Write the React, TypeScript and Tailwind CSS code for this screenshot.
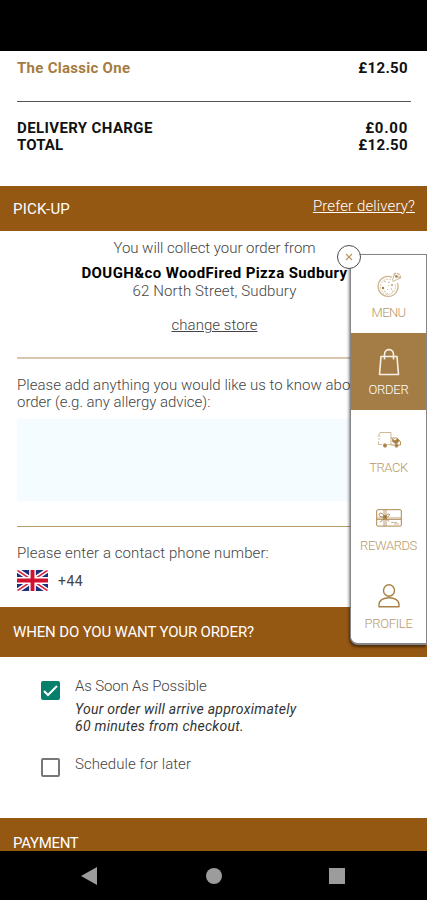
import type { ReactNode } from "react"

const Summary = () => {
  return (
    <section className="h-[135px] px-[17px] text-[15px] leading-[17px] font-bold text-[#111]">
      <div className="flex h-[50px] justify-between pt-[9px] pr-0.5">
        <span className="tracking-[0.28px] text-[#a47c42]">The Classic One</span>
        <span className="tracking-[0.35px]">£12.50</span>
      </div>
      <div className="-mr-px h-px bg-[#555]" />
      <div className="flex justify-between pt-[18px] pr-0.5">
        <span className="tracking-[0.38px]">DELIVERY CHARGE</span>
        <span className="tracking-[0.75px]">£0.00</span>
      </div>
      <div className="flex justify-between pr-0.5">
        <span className="tracking-[0.1px]">TOTAL</span>
        <span className="tracking-[0.35px]">£12.50</span>
      </div>
    </section>
  )
}

const Flag = () => (
  <svg className="h-[21px] w-[31px] rounded-[2px]" viewBox="0 0 60 40" preserveAspectRatio="none">
    <rect width="60" height="40" fill="#1f2f7c" />
    <path d="M0 0L60 40M60 0L0 40" stroke="#fff" strokeWidth="9" />
    <path d="M0 0L60 40M60 0L0 40" stroke="#d8283f" strokeWidth="3" />
    <path d="M30 0V40M0 20H60" stroke="#fff" strokeWidth="13" />
    <path d="M30 0V40M0 20H60" stroke="#d3112f" strokeWidth="7.5" />
  </svg>
)

const PizzaIcon = () => (
  <svg width="26" height="28" viewBox="0 0 26 28" fill="none" stroke="#cdb591">
    <path d="M16 6.200A10 10 0 1 0 21.500 12" strokeWidth="1.3" />
    <path d="M15 8.800A7.600 7.600 0 1 0 18.800 12.500" strokeWidth="0.8" strokeDasharray="2 1" />
    <path d="M16.500 9.500L18 4L24.500 7L16.500 10.500" strokeWidth="1" />
    <path d="M18 4C18.500 1 24.500 2 24.500 7" strokeWidth="1.4" strokeDasharray="3 0.800" />
    <path d="M8 10l2 1M12 12l2-1M8 20l2 1M15 17l1 2M11 23l1-1M12 18l-1 1M16 21l1-1M12 14l1 1" strokeWidth="0.9" />
    <circle cx="7" cy="17" r="1.200" fill="#a47c42" stroke="none" />
    <circle cx="16" cy="14" r="0.900" fill="#b8935e" stroke="none" />
    <circle cx="20.500" cy="5.500" r="1.300" fill="#a47c42" stroke="none" />
  </svg>
)

const BagIcon = () => (
  <svg width="22" height="28" viewBox="0 0 22 28" fill="none" stroke="#f7f0e6" strokeWidth="1.6">
    <path d="M3 8.500H19L20.500 26.500H1.500Z" strokeLinejoin="round" />
    <path d="M6.500 11.500V6.500C6.500 0 15.500 0 15.500 6.500V11.500" />
  </svg>
)

const TruckIcon = () => (
  <svg width="26" height="20" viewBox="0 0 26 20" fill="none" stroke="#b8935e" strokeWidth="1">
    <path d="M4 2.500H15V14.500H11.500M4 2.500L2.500 5M4.500 6H1.500M4 9H2M2.500 11.500V14.500H6" opacity="0.65" />
    <path d="M15 8H21L24.500 11.500V15H22.500M15 15H18" />
    <path d="M16.500 9L19 11L21.500 8.500L23.500 11L20 14L16.500 11.500Z" fill="#a47c42" />
    <circle cx="9" cy="15.500" r="1.700" fill="#a47c42" />
    <circle cx="20.500" cy="15.500" r="1.700" fill="#a47c42" />
  </svg>
)

const RewardsIcon = () => (
  <svg width="26" height="18" viewBox="0 0 26 18" fill="none" stroke="#ad8650" strokeWidth="1">
    <rect x="0.700" y="0.700" width="24.600" height="16.400" rx="1" />
    <path d="M8 1V17M10 1V17M1 9H25M1 10.500H25" strokeWidth="0.800" />
    <path d="M9 8C5 1 1.500 5 4 7.500L9 8.500C16 8 14 1 9 8ZM9 8.500L4 13.500M9 8.500L13 12.500" />
    <circle cx="9" cy="8" r="1.800" fill="#a47c42" />
    <path d="M15 13.500H21M18 15H23" strokeWidth="0.600" />
  </svg>
)

const ProfileIcon = () => (
  <svg width="22" height="24" viewBox="0 0 22 24" fill="none" stroke="#a98147" strokeWidth="1.400">
    <ellipse cx="11" cy="6.500" rx="5.500" ry="5.800" />
    <path d="M1 22.800V20.500C1 11.500 21 11.500 21 20.500V22.800Z" strokeLinejoin="round" />
  </svg>
)

interface MenuItemProps {
  label: ReactNode
  icon: ReactNode
  active?: boolean
}

const MenuItem = ({ label, icon, active = false }: MenuItemProps) => (
  <li
    className={
      active
        ? "flex h-[77px] flex-col items-center bg-[#a47c45] pt-[15px] text-white"
        : "flex h-[78px] flex-col items-center pt-4 text-[#b8996d]"
    }
  >
    <div className="flex h-7 items-center justify-center">{icon}</div>
    <span className="mt-1.5 text-[13px] leading-4 font-light">{label}</span>
  </li>
)

const SideMenu = () => {
  return (
    <nav className="absolute top-[254px] left-[350px] h-[391px] w-[77px] rounded-bl-[8px] border border-b-2 border-[#85858a] bg-white shadow-[-1px_2px_3px_rgba(0,0,0,0.5)]">
      <ul>
        <MenuItem icon={<PizzaIcon />} label={<span className="tracking-[-0.6px]">MENU</span>} />
        <MenuItem icon={<BagIcon />} label={<span className="tracking-[-0.2px]">ORDER</span>} active />
        <MenuItem icon={<TruckIcon />} label={<span className="tracking-[-0.4px]">TRACK</span>} />
        <MenuItem icon={<RewardsIcon />} label={<span className="tracking-[-0.4px]">REWARDS</span>} />
        <MenuItem icon={<ProfileIcon />} label={<span className="tracking-[-0.3px]">PROFILE</span>} />
      </ul>
      <button
        type="button"
        className="absolute -top-[10px] -left-[14px] flex size-6 items-center justify-center rounded-full border border-[#4c4c4c] bg-white"
      >
        <svg width="8" height="8" viewBox="0 0 8 8" stroke="#b8935e" strokeWidth="1.100">
          <path d="M1 1L7 7M7 1L1 7" />
        </svg>
      </button>
    </nav>
  )
}

const PickUp = () => {
  return (
    <section className="h-[376px] px-[17px] pt-[9px] text-[15px] leading-[17px] font-light text-[#444]">
      <div className="flex flex-col items-center pl-[2px]">
        <p className="tracking-[-0.02px]">You will collect your order from</p>
        <p className="mt-2 font-bold whitespace-nowrap tracking-[0.39px] text-black">DOUGH&amp;co WoodFired Pizza Sudbury</p>
        <p className="mt-px tracking-[0.1px]">62 North Street, Sudbury</p>
        <a className="mt-[17px] tracking-[0.05px] underline">change store</a>
      </div>
      <div className="mt-[23px] h-0.5 bg-[#d9c5b0]" />
      <p className="mt-[18px] whitespace-nowrap tracking-[0.03px]">
        Please add anything you would like us to know abo
      </p>
      <p className="tracking-[-0.02px]">order (e.g. any allergy advice):</p>
      <div className="mt-[8px] h-[82px] bg-[#f5fcff]" />
      <div className="mt-[25px] h-px bg-[#b99b6c]" />
      <p className="mt-[18px] tracking-[0.09px]">Please enter a contact phone number:</p>
      <div className="mt-[8px] flex items-center gap-[10px]">
        <Flag />
        <span className="text-sm font-normal tracking-[0.5px]">+44</span>
      </div>
    </section>
  )
}

const OrderTime = () => {
  return (
    <section className="h-[161px] pt-[21px] pl-[41px] text-[15px] leading-[17px] font-light text-[#444]">
      <div className="flex gap-[15px]">
        <div className="mt-[3px] flex size-[19px] items-center justify-center rounded-[2px] bg-[#07806b]">
          <svg width="15" height="12" viewBox="0 0 15 12" fill="none" stroke="#fff" strokeWidth="2">
            <path d="M1 6L5 10L14 1" />
          </svg>
        </div>
        <div>
          <p className="tracking-[-0.15px]">As Soon As Possible</p>
          <p className="mt-1.5 text-sm leading-[17px] font-normal text-[#333] italic">
            <span className="tracking-[0.26px]">Your order will arrive approximately</span>
            <br />
            <span className="tracking-[0.26px]">60 minutes from checkout.</span>
          </p>
        </div>
      </div>
      <div className="mt-[21px] flex gap-[15px]">
        <div className="mt-0.5 size-[19px] rounded-[2px] border-2 border-[#777]" />
        <p className="tracking-[0.05px]">Schedule for later</p>
      </div>
    </section>
  )
}

const App = () => {
  return (
    <div className="relative h-[900px] w-[427px] overflow-hidden bg-white font-['Roboto',sans-serif]">
      <div className="h-[51px] bg-black" />
      <Summary />
      <header className="flex h-[45px] justify-between bg-[#955813] pr-3 pl-[13px] text-[15px] leading-[17px] text-white">
        <span className="pt-[15px] tracking-[0.2px]">PICK-UP</span>
        <a className="pt-3 font-light tracking-[0.13px] underline">Prefer delivery?</a>
      </header>
      <PickUp />
      <header className="h-[50px] bg-[#955813] pt-[17px] pl-[13px] text-[15px] leading-[17px] text-white">
        <span className="tracking-[-0.15px]">WHEN DO YOU WANT YOUR ORDER?</span>
      </header>
      <OrderTime />
      <header className="h-[33px] bg-[#955813] pt-[17px] pl-[13px] text-[15px] leading-[16px] text-white">
        <span className="tracking-[-0.3px]">PAYMENT</span>
      </header>
      <footer className="flex h-[49px] items-center bg-black pl-[81px]">
        <svg width="17" height="18" viewBox="0 0 17 18">
          <path d="M0 9L16 0V18Z" fill="#9c9c9c" />
        </svg>
        <div className="ml-[108px] size-4 rounded-full bg-[#9c9c9c]" />
        <div className="ml-[107px] size-4 bg-[#9c9c9c]" />
      </footer>
      <SideMenu />
    </div>
  )
}

export default App
